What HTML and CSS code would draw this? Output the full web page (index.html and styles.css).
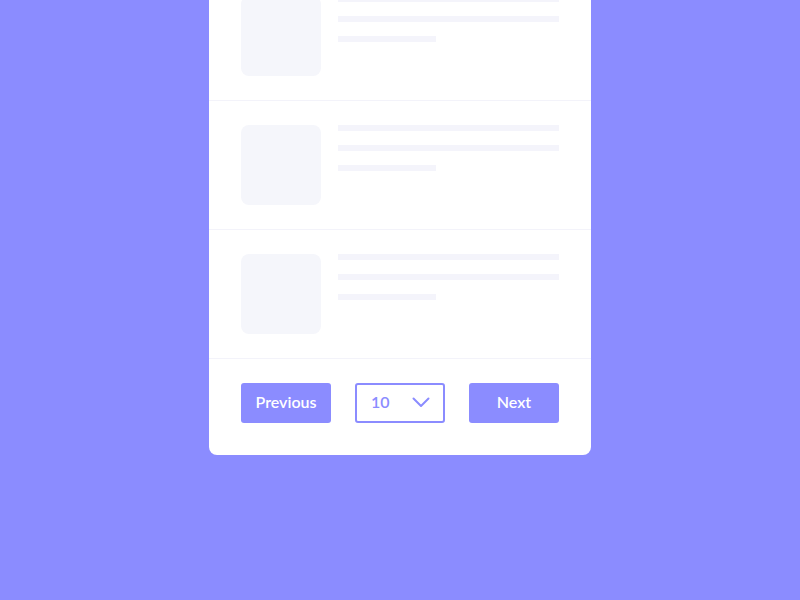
FILE: index.html
```html
<!DOCTYPE html>
<html>
<head>
<meta charset="utf-8">
<link rel="stylesheet" href="styles.css">
</head>
<body>
<div class="card">
  <div class="row">
    <div class="thumb"></div>
    <div class="lines"><div class="line"></div><div class="line"></div><div class="line short"></div></div>
  </div>
  <div class="row">
    <div class="thumb"></div>
    <div class="lines"><div class="line"></div><div class="line"></div><div class="line short"></div></div>
  </div>
  <div class="row">
    <div class="thumb"></div>
    <div class="lines"><div class="line"></div><div class="line"></div><div class="line short"></div></div>
  </div>
  <div class="pager">
    <button class="btn">Previous</button>
    <div class="select"><span class="val">10</span>
      <svg width="18" height="11" viewBox="0 0 18 11"><path d="M1.5 1.5 L9 9 L16.5 1.5" fill="none" stroke="#8b8cff" stroke-width="2" stroke-linecap="round" stroke-linejoin="round"/></svg>
    </div>
    <button class="btn">Next</button>
  </div>
</div>
</body>
</html>
```
FILE: styles.css
```css
html, body {
  margin: 0;
  padding: 0;
  background: #8b8cff;
  height: 100%;
  overflow: hidden;
}
body {
  font-family: "Lato", "Noto Sans", sans-serif;
}
.card {
  width: 382px;
  margin: -28px auto 0;
  background: #ffffff;
  border-radius: 0 0 8px 8px;
}
.row {
  display: flex;
  gap: 17px;
  padding: 24px 32px;
  border-bottom: 1px solid #f3f3fa;
}
.thumb {
  width: 80px;
  height: 80px;
  border-radius: 8px;
  background: #f5f6fb;
  flex: none;
}
.lines {
  flex: 1;
  display: flex;
  flex-direction: column;
  gap: 14px;
}
.line {
  height: 6px;
  background: #f4f4fb;
}
.line.short {
  width: 98px;
}
.pager {
  display: flex;
  gap: 24px;
  padding: 24px 32px 32px;
}
.btn {
  width: 90px;
  height: 40px;
  border: none;
  border-radius: 3px;
  background: #8b8cff;
  color: #ffffff;
  font-family: "Lato", "Noto Sans", sans-serif;
  font-weight: 600;
  font-size: 16px;
  padding: 0 0 3px;
}
.select {
  width: 90px;
  height: 40px;
  box-sizing: border-box;
  border: 2px solid #8b8cff;
  border-radius: 3px;
  display: flex;
  align-items: center;
  justify-content: space-between;
  padding: 0 13px 0 14px;
  color: #8b8cff;
  font-family: "Lato", "Noto Sans", sans-serif;
  font-weight: 600;
  font-size: 16px;
}
.val {
  padding-bottom: 3px;
}
.select svg {
  display: block;
  margin-top: -1px;
}
```
